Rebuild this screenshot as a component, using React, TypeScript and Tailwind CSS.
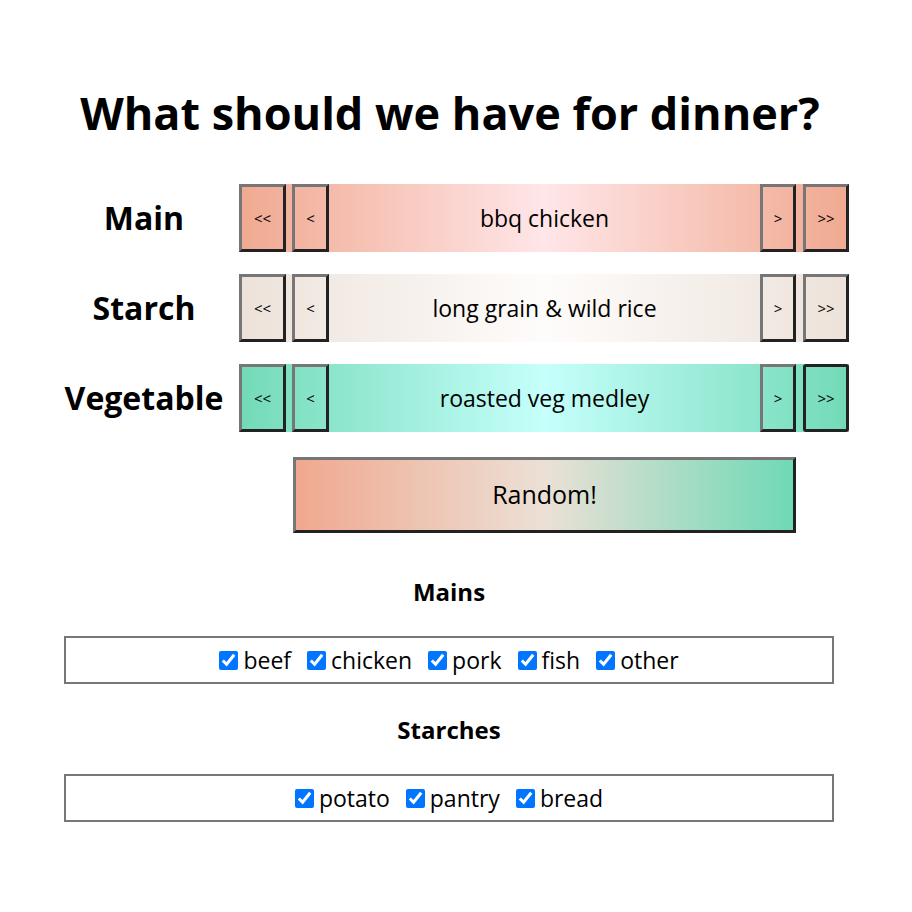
import { useState } from "react";

type Course = {
  label: string;
  value: string;
  gradient: string;
};

const COURSES: Course[] = [
  {
    label: "Main",
    value: "bbq chicken",
    gradient: "bg-[linear-gradient(to_right,#f0a990,#ffe6e8_50%,#f0a990)]",
  },
  {
    label: "Starch",
    value: "long grain & wild rice",
    gradient: "bg-[linear-gradient(to_right,#ece2da,#fefcfb_50%,#ece2da)]",
  },
  {
    label: "Vegetable",
    value: "roasted veg medley",
    gradient: "bg-[linear-gradient(to_right,#72dab7,#c6fffb_50%,#72dab7)]",
  },
];

const MAINS = ["beef", "chicken", "pork", "fish", "other"];
const STARCHES = ["potato", "pantry", "bread"];

const bevel =
  "border-[3px] border-t-[#767676] border-l-[#767676] border-b-[#222] border-r-[#222]";

function StepButton({
  text,
  width,
  active,
}: {
  text: string;
  width: string;
  active?: boolean;
}) {
  return (
    <button
      className={
        "flex h-full items-center justify-center bg-transparent text-[15px] text-black " +
        width +
        " " +
        (active ? "rounded-[3px] border-[3px] border-[#222]" : bevel)
      }
    >
      {text}
    </button>
  );
}

function CourseRow({ course, last }: { course: Course; last?: boolean }) {
  return (
    <>
      <div className="flex h-[68px] items-center justify-center text-[32px] font-bold text-black">
        {course.label}
      </div>
      <div className={"flex h-[68px] items-stretch " + course.gradient}>
        <StepButton text="<<" width="w-[47px]" />
        <div className="w-[6px]" />
        <StepButton text="<" width="w-[37px]" />
        <div className="flex flex-1 items-center justify-center text-[23px] text-black">
          {course.value}
        </div>
        <StepButton text=">" width="w-[36px]" />
        <div className="w-[7px]" />
        <StepButton text=">>" width="w-[46px]" active={last} />
      </div>
    </>
  );
}

function FilterBox({ items }: { items: string[] }) {
  const [checked, setChecked] = useState<Record<string, boolean>>(() =>
    Object.fromEntries(items.map((i) => [i, true])),
  );
  return (
    <div className="flex h-[48px] w-[770px] items-center justify-center gap-[16px] border-2 border-[#777] text-[23px] text-black">
      {items.map((item) => (
        <label key={item} className="flex items-center gap-[5px]">
          <input
            type="checkbox"
            checked={checked[item]}
            onChange={() => setChecked({ ...checked, [item]: !checked[item] })}
            className="h-[19px] w-[19px] accent-[#0075ff]"
          />
          <span>{item}</span>
        </label>
      ))}
    </div>
  );
}

export default function App() {
  return (
    <div
      className="min-h-[912px] w-[912px] bg-white"
      style={{ fontFamily: '"Open Sans", "DejaVu Sans", sans-serif' }}
    >
      <div className="w-[900px] pt-[84px] text-center">
        <h1 className="text-[45px] leading-[58px] font-bold text-black">
          What should we have for dinner?
        </h1>
      </div>

      <div className="mt-[42px] grid grid-cols-[168px_610px] gap-x-[11px] gap-y-[22px] pl-[60px]">
        {COURSES.map((c, i) => (
          <CourseRow key={c.label} course={c} last={i === COURSES.length - 1} />
        ))}
      </div>

      <div className="mt-[25px] pl-[293px]">
        <button
          className={
            "h-[76px] w-[503px] bg-[linear-gradient(to_right,#f0a88f,#ece0d6_50%,#6fd9b6)] text-[25px] text-black " +
            bevel
          }
        >
          Random!
        </button>
      </div>

      <div className="flex w-[898px] flex-col items-center">
        <h2 className="mt-[44px] text-[24px] leading-[30px] font-bold text-black">
          Mains
        </h2>
        <div className="mt-[29px]">
          <FilterBox items={MAINS} />
        </div>
        <h2 className="mt-[31px] text-[24px] leading-[30px] font-bold text-black">
          Starches
        </h2>
        <div className="mt-[29px]">
          <FilterBox items={STARCHES} />
        </div>
      </div>
    </div>
  );
}
